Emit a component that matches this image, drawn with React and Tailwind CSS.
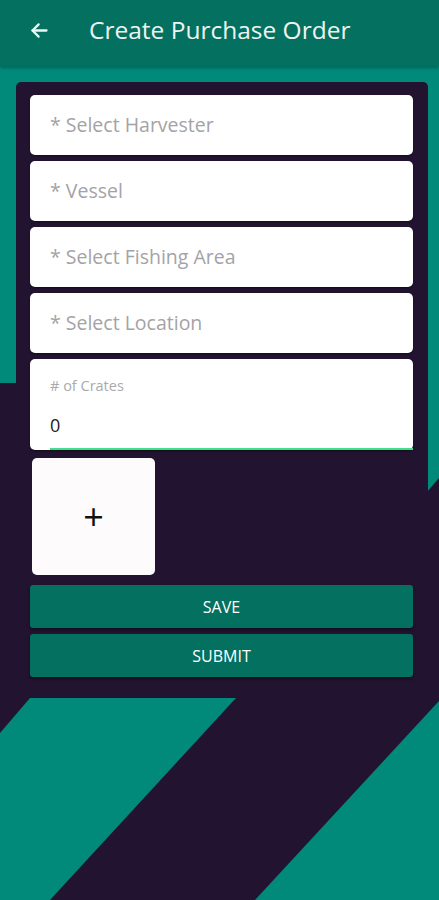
import React from 'react';

const fields = ['* Select Harvester', '* Vessel', '* Select Fishing Area', '* Select Location'];

const Backdrop = () => (
    <svg className="absolute inset-0 w-full h-full" viewBox="0 0 439 900" preserveAspectRatio="none">
        <polygon points="0,66 439,66 439,478 427,492 16,492 16,383 0,383" fill="#01897a" />
        <polygon points="30,698 236,698 50,900 0,900 0,733" fill="#01897a" />
        <polygon points="439,701 439,900 255,900" fill="#01897a" />
    </svg>
);

const App = () => {
    return (
        <div className="relative w-full h-[900px] overflow-hidden bg-[#221330] font-['Open_Sans',sans-serif]">
            <Backdrop />

            <div className="relative">
                {/* Header */}
                <div className="h-[66px] bg-[#04705f] flex items-center pb-[5px] shadow-[0_2px_3px_rgba(0,0,0,0.25)]">
                    <svg className="ml-[29px] w-[21px] h-[21px]" viewBox="0 0 24 24" fill="none" stroke="#eef4f2" strokeWidth="2.6" strokeLinecap="round" strokeLinejoin="round">
                        <path d="M20 12H4" />
                        <path d="M11 5l-7 7 7 7" />
                    </svg>
                    <h1 className="ml-[39px] text-[24.5px] text-[#eef4f2] leading-none">Create Purchase Order</h1>
                </div>

                {/* Form panel */}
                <div className="ml-[16px] mr-[11px] mt-[16px] rounded-t-[5px] bg-[#221330] pl-[14px] pr-[15px] pt-[13px] flex flex-col gap-[6px]">
                    {fields.map((f) => (
                        <div key={f} className="h-[60px] bg-white rounded-[5px] flex items-center pl-[20px] shadow-[0_1px_2px_rgba(0,0,0,0.5)]">
                            <span className="text-[19.5px] text-[#a3a3a6]">{f}</span>
                        </div>
                    ))}

                    {/* Crates */}
                    <div className="relative h-[91px] bg-white rounded-[5px] pl-[20px] pt-[20px] shadow-[0_1px_2px_rgba(0,0,0,0.5)]">
                        <div className="text-[14.5px] text-[#a9a9ac] leading-none">
                            # of Crates
                        </div>
                        <div className="mt-[22px] text-[18px] text-[#1c1c24] leading-none">0</div>
                        <div className="absolute left-[20px] right-0 bottom-0 h-[2px] bg-[#3fe08a]" />
                    </div>

                    {/* Photo add */}
                    <div className="ml-[2px] mt-[2px] w-[123px] h-[117px] bg-[#fdfbfc] rounded-[5px] flex items-center justify-center">
                        <span className="text-[36px] text-[#111] leading-none">+</span>
                    </div>

                    <div className="mt-[4px] flex flex-col gap-[6px]">
                        <button className="h-[43px] bg-[#04705f] rounded-[3px] text-white text-[16px] font-medium shadow-[0_2px_3px_rgba(0,0,0,0.4)]">
                            SAVE
                        </button>
                        <button className="h-[43px] bg-[#04705f] rounded-[3px] text-white text-[16px] font-medium shadow-[0_2px_3px_rgba(0,0,0,0.4)]">
                            SUBMIT
                        </button>
                    </div>
                </div>
            </div>
        </div>
    );
};

export default App;
